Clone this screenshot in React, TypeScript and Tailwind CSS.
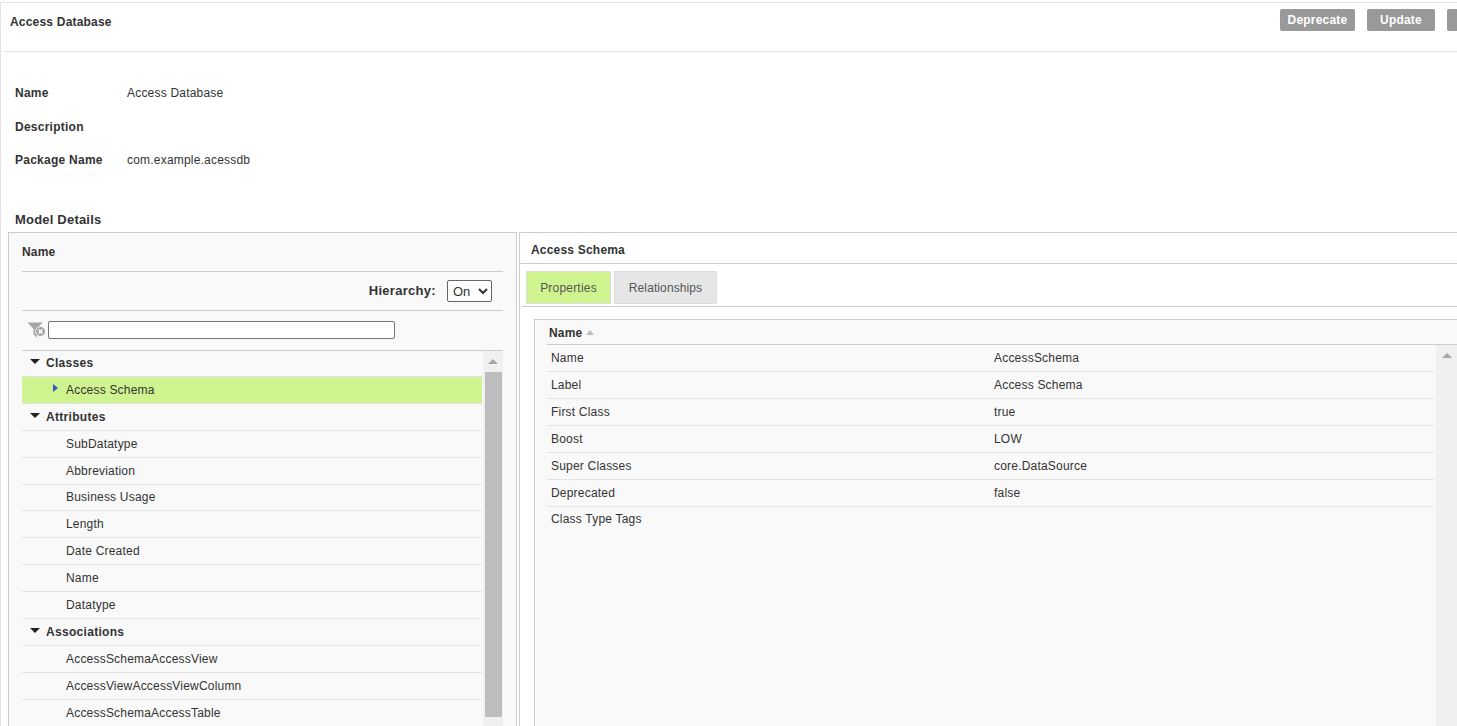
const FONT = "font-['Liberation_Sans',Arial,sans-serif]";

const treeGroups = [
  { name: "Classes", items: ["Access Schema"] },
  {
    name: "Attributes",
    items: ["SubDatatype", "Abbreviation", "Business Usage", "Length", "Date Created", "Name", "Datatype"],
  },
  { name: "Associations", items: ["AccessSchemaAccessView", "AccessViewAccessViewColumn", "AccessSchemaAccessTable"] },
];

const properties = [
  ["Name", "AccessSchema"],
  ["Label", "Access Schema"],
  ["First Class", "true"],
  ["Boost", "LOW"],
  ["Super Classes", "core.DataSource"],
  ["Deprecated", "false"],
  ["Class Type Tags", ""],
];

function ActionButton({ label, className }: { label: string; className: string }) {
  return (
    <button className={`h-[22px] shrink-0 rounded-[2px] bg-[#999999] text-center text-[12px] font-bold tracking-[0.2px] text-white ${className}`}>
      {label}
    </button>
  );
}

function Field({ label, value, className }: { label: string; value?: string; className: string }) {
  return (
    <div className={`flex h-[14px] items-center text-[12px] text-[#333333] ${className}`}>
      <span className="w-[112px] font-bold tracking-[0.25px]">{label}</span>
      <span className="tracking-[0.2px]">{value}</span>
    </div>
  );
}

function FilterClearIcon() {
  return (
    <svg width="20" height="16" viewBox="0 0 20 16" className="shrink-0">
      <path d="M0.5 0.5 H15.5 L10 7 V15.5 L6.5 12.5 V7 Z" fill="#a6a6a6" />
      <circle cx="13.5" cy="9.5" r="5" fill="#a6a6a6" stroke="#f9f9f9" strokeWidth="1" />
      <path d="M11.6 7.6 L15.4 11.4 M15.4 7.6 L11.6 11.4" stroke="#ffffff" strokeWidth="1.4" />
    </svg>
  );
}

function Scrollbar({ className, thumb }: { className: string; thumb: boolean }) {
  return (
    <div className={`flex shrink-0 flex-col items-center bg-[#f0f0f0] ${className}`}>
      <div className="flex h-[21px] w-full shrink-0 items-center justify-center">
        <div className="h-0 w-0 border-x-[5px] border-b-[5px] border-x-transparent border-b-[#a6a6a6]" />
      </div>
      {thumb && <div className="h-[345px] w-[17px] bg-[#bdbdbd]" />}
    </div>
  );
}

function TreeRow({ label, selected }: { label: string; selected: boolean }) {
  return (
    <div className={`flex h-[26.92px] items-center border-b border-[#e3e3e3] pl-[44px] text-[12px] tracking-[0.2px] text-[#333333] ${selected ? "bg-[#cff48f]" : ""}`}>
      {label}
    </div>
  );
}

function TreePanel() {
  return (
    <div className="flex h-full w-[509px] shrink-0 flex-col border-x border-t border-[#cccccc] bg-[#f9f9f9] pl-[13px] pr-[13px]">
      <div className="flex h-[39px] shrink-0 items-center border-b border-[#cccccc] pb-[1px] text-[12px] font-bold tracking-[0.2px] text-[#333333]">
        Name
      </div>
      <div className="flex h-[39px] shrink-0 items-center justify-end gap-[11px] border-b border-[#cccccc] pr-[11px]">
        <span className="text-[13px] font-bold tracking-[0.3px] text-[#333333]">Hierarchy:</span>
        <select className="h-[22px] w-[45px] rounded-[2px] border border-[#666666] bg-white pl-[1px] text-[13px] text-[#333333]">
          <option>On</option>
          <option>Off</option>
        </select>
      </div>
      <div className="flex h-[40px] shrink-0 items-center gap-[1px] border-b border-[#cccccc] pb-[2px] pl-[5px]">
        <FilterClearIcon />
        <input className="h-[18px] w-[347px] rounded-[2px] border border-[#767676] bg-white" />
      </div>
      <div className="flex min-h-0 flex-1 overflow-hidden">
        <div className="mt-[-1px] w-[460px] shrink-0">
          {treeGroups.map((group) => (
            <div key={group.name}>
              <div className="flex h-[26.92px] items-center border-b border-[#e3e3e3] pl-[8px] text-[12px] font-bold tracking-[0.3px] text-[#333333]">
                <div className="mr-[6px] mt-[-3px] h-0 w-0 border-x-[5px] border-t-[5px] border-x-transparent border-t-[#222222]" />
                {group.name}
              </div>
              {group.items.map((item, i) => (
                <div key={item} className="relative">
                  <TreeRow label={item} selected={group.name === "Classes"} />
                  {group.name === "Classes" && i === 0 && (
                    <div className="absolute left-[31px] top-[7px] h-0 w-0 border-y-[4.5px] border-l-[5px] border-y-transparent border-l-[#3b55c4]" />
                  )}
                </div>
              ))}
            </div>
          ))}
        </div>
        <Scrollbar className="ml-[1px] h-full w-[20px]" thumb />
      </div>
    </div>
  );
}

function DetailPanel() {
  return (
    <div className="ml-[2px] flex h-full min-w-0 flex-1 flex-col border-l border-t border-[#cccccc] bg-white">
      <div className="flex h-[31px] shrink-0 items-center border-b border-[#cccccc] pl-[11px] pt-[4px] text-[12px] font-bold tracking-[0.2px] text-[#333333]">
        Access Schema
      </div>
      <div className="ml-[2px] flex h-[43px] shrink-0 items-start gap-[3px] border-b border-[#cccccc] pl-[4px] pt-[7px]">
        <button className="h-[33px] w-[85px] border border-[#dedede] bg-[#cff48f] text-[12px] tracking-[0.2px] text-[#555555]">
          Properties
        </button>
        <button className="h-[33px] w-[103px] border border-[#dedede] bg-[#e6e6e6] text-[12px] tracking-[0.1px] text-[#555555]">
          Relationships
        </button>
      </div>
      <div className="ml-[14px] mt-[12px] flex min-h-0 flex-1 flex-col border-l border-t border-[#cccccc] bg-[#f9f9f9] pl-[12px]">
        <div className="flex h-[25px] shrink-0 items-center border-b border-[#cccccc] pl-[2px] pt-[2px] text-[12px] font-bold tracking-[0.2px] text-[#333333]">
          Name
          <div className="ml-[4px] mt-[-1px] h-0 w-0 border-x-[4.5px] border-b-[5px] border-x-transparent border-b-[#bdbdbd]" />
        </div>
        <div className="flex min-h-0 flex-1">
          <div className="w-[887px] shrink-0">
            {properties.map(([name, value], i) => (
              <div key={name} className={`flex h-[27px] items-center pl-[4px] text-[12px] tracking-[0.2px] text-[#333333] ${i < properties.length - 1 ? "border-b border-[#e3e3e3]" : "pb-[3px]"}`}>
                <span className="w-[443px]">{name}</span>
                <span>{value}</span>
              </div>
            ))}
          </div>
          <Scrollbar className="ml-[2px] h-full w-[21px]" thumb={false} />
        </div>
      </div>
    </div>
  );
}

export default function App() {
  return (
    <div className={`${FONT} flex h-[726px] w-[1457px] flex-col overflow-hidden bg-white`}>
      <div className="flex min-h-0 flex-1 flex-col">
        <div className="mt-[2px] h-px shrink-0 bg-[#e3e3e3]" />
        <div className="flex min-h-0 flex-1 flex-col border-l border-[#e3e3e3]">
          <div className="ml-[3px] flex h-[49px] shrink-0 items-start justify-between border-b border-[#e3e3e3] pl-[6px] pt-[6px]">
            <h1 className="mt-[4px] text-[12px] font-bold tracking-[0.2px] text-[#333333]">Access Database</h1>
            <div className="flex gap-[12px]">
              <ActionButton label="Deprecate" className="w-[75px]" />
              <ActionButton label="Update" className="w-[68px]" />
              <ActionButton label="" className="mr-[-60px] w-[70px]" />
            </div>
          </div>
          <div className="pl-[14px]">
            <Field label="Name" value="Access Database" className="mt-[34px]" />
            <Field label="Description" className="mt-[20px]" />
            <Field label="Package Name" value="com.example.acessdb" className="mt-[19px]" />
            <h2 className="mt-[45px] text-[13px] font-bold leading-[16px] tracking-[0.2px] text-[#333333]">Model Details</h2>
          </div>
          <div className="ml-[7px] mt-[4px] flex min-h-0 flex-1">
            <TreePanel />
            <DetailPanel />
          </div>
        </div>
      </div>
    </div>
  );
}
